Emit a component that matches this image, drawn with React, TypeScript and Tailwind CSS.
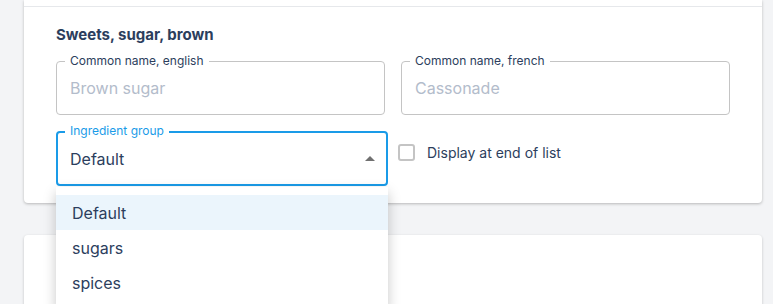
import { useState } from 'react';

const groups = ['Default', 'sugars', 'spices'];

function OutlinedField({ label, placeholder }: { label: string; placeholder: string }) {
  return (
    <div className="relative h-[54px] flex-1 rounded-[4px] border border-[#c4c4c4]">
      <span className="absolute left-[8px] top-[-9px] bg-white px-[5px] text-[12px] leading-[16px] text-[#2c3e5d]">
        {label}
      </span>
      <div className="flex h-full items-center px-[13px] text-[16px] text-[#b3bccb]">{placeholder}</div>
    </div>
  );
}

export default function App() {
  const [selected] = useState('Default');

  return (
    <div
      className="relative h-[304px] w-[773px] overflow-hidden bg-[#f3f4f6]"
      style={{ fontFamily: 'Inter, "Open Sans", sans-serif' }}
    >
      <div className="ml-[24px] w-[738px] rounded-b-[4px] bg-white shadow-[0_1px_3px_rgba(0,0,0,0.25)]">
        <div className="h-[7px] border-b border-[#e6e8eb]" />
        <div className="px-[32px] pb-[17px] pt-[17px]">
          <h2 className="text-[15px] font-bold leading-[22px] text-[#2c3e5d]">Sweets, sugar, brown</h2>
          <div className="mt-[15px] flex gap-[16px]">
            <OutlinedField label="Common name, english" placeholder="Brown sugar" />
            <OutlinedField label="Common name, french" placeholder="Cassonade" />
          </div>
          <div className="mt-[16px] flex items-start gap-[10px]">
            <div className="relative h-[55px] w-[332px] rounded-[4px] border-2 border-[#1a9be8]">
              <span className="absolute left-[7px] top-[-10px] bg-white px-[5px] text-[12px] leading-[16px] text-[#1a9be8]">
                Ingredient group
              </span>
              <div className="flex h-full items-center justify-between pl-[12px] pr-[11px]">
                <span className="text-[16px] text-[#2c3e5d]">{selected}</span>
                <svg width="10" height="5" viewBox="0 0 10 5">
                  <path d="M0 5 L5 0 L10 5 Z" fill="#707070" />
                </svg>
              </div>
            </div>
            <label className="mt-[11px] flex items-center gap-[12px]">
              <span className="h-[17px] w-[17px] rounded-[3px] border-2 border-[#c4c4c4] bg-white" />
              <span className="text-[14px] text-[#2c3e5d]">Display at end of list</span>
            </label>
          </div>
        </div>
      </div>

      <div className="ml-[24px] mt-[32px] h-[80px] w-[738px] rounded-[4px] bg-white shadow-[0_1px_3px_rgba(0,0,0,0.2)]" />

      {/* open select menu */}
      <ul className="absolute left-[56px] top-[187px] w-[332px] bg-white py-[8px] shadow-[0_5px_12px_rgba(0,0,0,0.22)]">
        {groups.map((g) => (
          <li
            key={g}
            className={`flex h-[35px] items-center px-[16px] text-[16px] text-[#2c3e5d] ${g === selected ? 'bg-[#ebf5fc]' : ''}`}
          >
            {g}
          </li>
        ))}
      </ul>
    </div>
  );
}
